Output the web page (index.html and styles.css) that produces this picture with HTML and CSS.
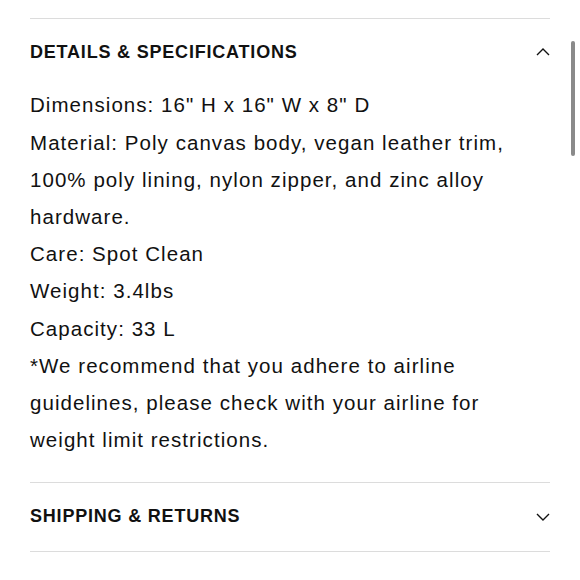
FILE: index.html
```html
<!DOCTYPE html>
<html>
<head>
<meta charset="utf-8">
<link rel="stylesheet" href="styles.css">
</head>
<body>
<div class="page">
  <section class="acc">
    <div class="acc-head">
      <h2 class="acc-title">DETAILS &amp; SPECIFICATIONS</h2>
      <svg class="chev" width="14" height="8" viewBox="0 0 14 8"><path d="M1 7 L7 1 L13 7" fill="none" stroke="#111" stroke-width="1.4"/></svg>
    </div>
    <div class="acc-body">
      <p>Dimensions: 16" H x 16" W x 8" D</p>
      <p>Material: Poly canvas body, vegan leather trim, 100% poly lining, nylon zipper, and zinc alloy hardware.</p>
      <p>Care: Spot Clean</p>
      <p>Weight: 3.4lbs</p>
      <p>Capacity: 33 L</p>
      <p>*We recommend that you adhere to airline guidelines, please check with your airline for weight limit restrictions.</p>
    </div>
  </section>
  <section class="acc last">
    <div class="acc-head tall">
      <h2 class="acc-title">SHIPPING &amp; RETURNS</h2>
      <svg class="chev" width="14" height="8" viewBox="0 0 14 8"><path d="M1 1 L7 7 L13 1" fill="none" stroke="#111" stroke-width="1.4"/></svg>
    </div>
  </section>
</div>
<div class="scrollbar"></div>
</body>
</html>
```

FILE: styles.css
```css
html, body {
  margin: 0;
  padding: 0;
  background: #fff;
}
body {
  font-family: "Liberation Sans", Arial, sans-serif;
  color: #111;
}
.page {
  padding: 18px 30px 0 30px;
}
.acc {
  border-top: 1px solid #dcdcdc;
}
.acc.last {
  border-bottom: 1px solid #dcdcdc;
}
.acc-head {
  height: 66px;
  display: flex;
  align-items: center;
  justify-content: space-between;
}
.acc-head.tall {
  height: 68px;
}
.acc-title {
  margin: 0;
  font-size: 18px;
  font-weight: 700;
  letter-spacing: 0.8px;
}
.chev {
  display: block;
}
.acc-body {
  padding: 1.4px 0 23.5px 0;
  font-size: 20.5px;
  line-height: 37.2px;
  letter-spacing: 1.05px;
}
.acc-body p {
  margin: 0;
}
.scrollbar {
  position: absolute;
  left: 571px;
  top: 41px;
  width: 4px;
  height: 115px;
  border-radius: 2px;
  background: #8a8a8a;
}
```
